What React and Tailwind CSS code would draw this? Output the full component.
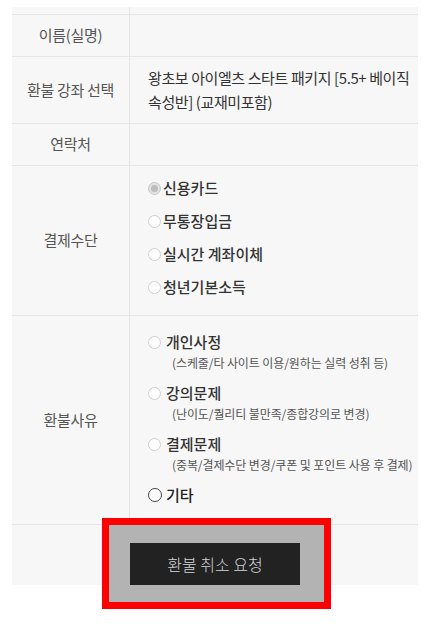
const font = { fontFamily: '"Noto Sans CJK KR", "Noto Sans", sans-serif' }

function Radio({ checked, dark }) {
  if (dark) {
    return <span className="inline-block w-[14px] h-[14px] rounded-full border-[1.5px] border-[#444] bg-white shrink-0" />
  }
  if (checked) {
    return (
      <span className="inline-flex items-center justify-center w-[13px] h-[13px] rounded-full border border-[#c8c8c8] bg-[#e2e2e2] shrink-0">
        <span className="w-[7px] h-[7px] rounded-full bg-[#bdbdbd]" />
      </span>
    )
  }
  return <span className="inline-block w-[13px] h-[13px] rounded-full border border-[#cfcfcf] bg-white shrink-0" />
}

const payments = ['신용카드', '무통장입금', '실시간 계좌이체', '청년기본소득']

const reasons = [
  { title: '개인사정', sub: '(스케줄/타 사이트 이용/원하는 실력 성취 등)' },
  { title: '강의문제', sub: '(난이도/퀄리티 불만족/종합강의로 변경)' },
  { title: '결제문제', sub: '(중복/결제수단 변경/쿠폰 및 포인트 사용 후 결제)' },
]

function Row({ label, height, children }) {
  return (
    <div className={`grid grid-cols-[118px_1fr] border-b border-[#e6e6e6] ${height}`}>
      <div className="flex items-center justify-center border-r border-[#e6e6e6] text-[15px] text-[#555] tracking-[-0.3px]">
        {label}
      </div>
      <div className="flex flex-col justify-center pl-[18px] text-[15px] text-[#333]">{children}</div>
    </div>
  )
}

export default function App() {
  return (
    <div className="w-[423px] h-[632px] bg-white pt-[7px] overflow-hidden" style={font}>
      <div className="ml-[12px] w-[406px] bg-[#f7f7f7]">
        <div className="grid grid-cols-[118px_1fr] border-b border-[#e6e6e6] h-[8px]">
          <div className="border-r border-[#e6e6e6]" />
          <div />
        </div>

        <Row label="이름(실명)" height="h-[42px]" />

        <Row label="환불 강좌 선택" height="h-[67px]">
          <p className="leading-[24px] pr-[2px] tracking-[-0.4px]">
            왕초보 아이엘츠 스타트 패키지 [5.5+ 베이직 속성반] (교재미포함)
          </p>
        </Row>

        <Row label="연락처" height="h-[42px]" />

        <Row label="결제수단" height="h-[150px]">
          <div className="flex flex-col gap-[13px] -mt-[6px]">
            {payments.map((p, i) => (
              <label key={p} className="flex items-center h-[20px] font-medium">
                <Radio checked={i === 0} />
                <span className="ml-[2px]">{p}</span>
              </label>
            ))}
          </div>
        </Row>

        <Row label="환불사유" height="h-[209px]">
          <div className="flex flex-col -mt-[3px]">
            {reasons.map((r) => (
              <div key={r.title} className="mb-[11px]">
                <label className="flex items-center h-[20px] font-medium">
                  <Radio />
                  <span className="ml-[5px]">{r.title}</span>
                </label>
                <p className="pl-[24px] mt-[2px] text-[12px] leading-[18px] text-[#555] tracking-[-0.1px]">{r.sub}</p>
              </div>
            ))}
            <label className="flex items-center h-[20px] font-medium">
              <Radio dark />
              <span className="ml-[4px] text-[#222]">기타</span>
            </label>
          </div>
        </Row>

        <div className="h-[67px] relative">
          <div className="relative z-10 ml-[90px] -mt-[7px] w-[229px] h-[91px] border-[7px] border-[#ff0000] bg-[#b3b3b3] pl-[21px] pt-[18px]">
            <button className="w-[170px] h-[42px] bg-[#222222] text-[16px] font-light text-[#d4d4d4]">
              환불 취소 요청
            </button>
          </div>
        </div>
      </div>
    </div>
  )
}
